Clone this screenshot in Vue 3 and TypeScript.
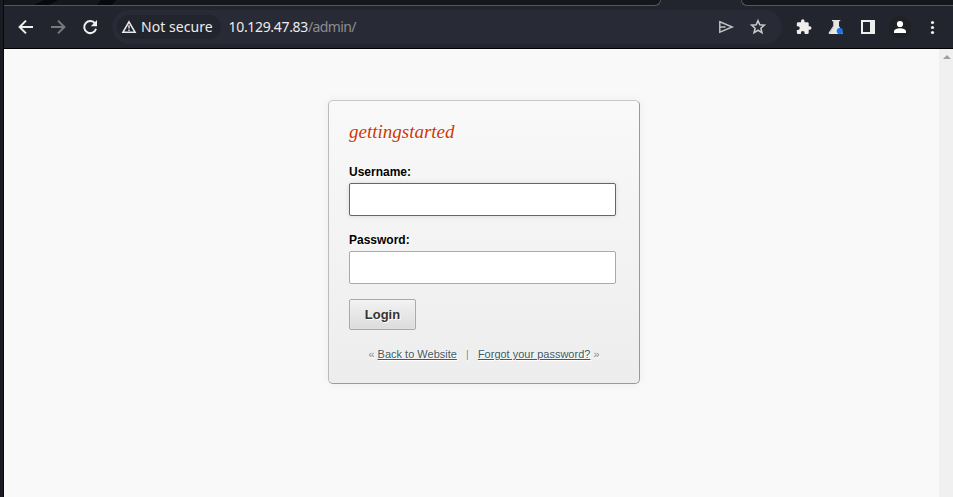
<script setup lang="ts">
import { ref } from 'vue'

const username = ref<string>('')
const password = ref<string>('')
</script>

<template>
  <div class="window">
    <header class="chrome">
      <div class="tabs">
        <div class="tab-left">
          <svg class="streaks" width="120" height="5" viewBox="0 0 120 5"><path d="M30 5 40 0H54L45 5ZM93 5 97 0H112L108 5Z" fill="#08090c" /></svg>
        </div>
        <div class="tab-active"></div>
        <div class="tab-right"></div>
      </div>
      <div class="toolbar">
        <svg class="nav back" width="20" height="20" viewBox="0 0 20 20"><path d="M17 10H4M10 3.6 3.6 10l6.4 6.4" fill="none" stroke="#efefed" stroke-width="2" /></svg>
        <svg class="nav forward" width="20" height="20" viewBox="0 0 20 20"><path d="M3 10h13M10 3.6l6.4 6.4-6.4 6.4" fill="none" stroke="#797a7d" stroke-width="2" /></svg>
        <svg class="nav reload" width="20" height="20" viewBox="0 0 20 20"><path d="M15.1 6.6A6 6 0 1 0 16 11.7" fill="none" stroke="#efefed" stroke-width="2" /><path d="M17 3v6.2h-6.2Z" fill="#efefed" /></svg>
        <div class="omnibox">
          <div class="chip">
            <svg width="16" height="16" viewBox="0 0 16 16"><path d="M8 2.9 14 13.2H2Z" fill="none" stroke="#e9e9e9" stroke-width="1.6" /><path d="M8 6.3v3.2M8 10.6v1.5" stroke="#e9e9e9" stroke-width="1.4" /></svg>
            <span>Not secure</span>
          </div>
          <div class="url"><span class="host">10.129.47.83</span><span class="path">/admin/</span></div>
          <svg class="send" width="18" height="18" viewBox="0 0 18 18"><path d="M2.8 3.8 15.2 9 2.8 14.2ZM3 9h5.5" fill="none" stroke="#c1c1c3" stroke-width="1.5" /></svg>
          <svg class="star" width="18" height="18" viewBox="0 0 18 18"><path d="m9 2.7 1.8 4.1 4.5.4-3.4 3 1 4.4L9 12.3l-3.9 2.3 1-4.4-3.4-3 4.5-.4Z" fill="none" stroke="#c8c8c9" stroke-width="1.6" /></svg>
        </div>
        <div class="actions">
          <svg width="18" height="18" viewBox="0 0 24 24"><path fill="#eeeeec" transform="translate(.6 .9) scale(.93)" d="M20.5 11H19V7a2 2 0 0 0-2-2h-4V3.5a2.5 2.5 0 0 0-5 0V5H4a2 2 0 0 0-2 2v3.8h1.5a2.7 2.7 0 0 1 0 5.4H2V20a2 2 0 0 0 2 2h3.8v-1.5a2.7 2.7 0 0 1 5.4 0V22H17a2 2 0 0 0 2-2v-4h1.5a2.5 2.5 0 0 0 0-5Z" /></svg>
          <svg width="18" height="18" viewBox="0 0 18 18"><path fill="#e8e6e3" d="M5 2h8.200v1.300H12V8l3.500 6.500c.3.900 0 1.500-.8 1.500H2.600c-.8 0-1.100-.7-.8-1.500L6.200 8V3.300H5Z" /><path d="M6.200 3.300h.9V8l-3.900 6.500h-1L6.200 8Z" fill="#b5b5b5" /><circle cx="12.800" cy="13.100" r="3.100" fill="#1a73e8" /></svg>
          <svg width="18" height="18" viewBox="0 0 18 18"><path fill="#eeeeec" fill-rule="evenodd" d="M2 2h14v14H2ZM4 4v10h7V4Z" /></svg>
          <svg class="avatar" width="22" height="22" viewBox="0 0 22 22"><circle cx="11" cy="11" r="11" fill="#202124" /><circle cx="11" cy="8" r="3.1" fill="#fff" /><path d="M5 17v-1.5C5 13.2 8.5 12.3 11 12.3s6 .9 6 3.2V17Z" fill="#fff" /></svg>
          <svg width="18" height="18" viewBox="0 0 18 18"><g fill="#eeeeec"><circle cx="9.5" cy="4.5" r="1.6" /><circle cx="9.5" cy="9.5" r="1.6" /><circle cx="9.5" cy="14.5" r="1.6" /></g></svg>
        </div>
      </div>
    </header>
    <div class="viewport">
      <main class="page">
        <form class="card" @submit.prevent>
          <h1>gettingstarted</h1>
          <label for="user">Username:</label>
          <input id="user" v-model="username" class="active" type="text" />
          <label for="pass">Password:</label>
          <input id="pass" v-model="password" type="password" />
          <button type="submit">Login</button>
          <p class="links">« <a href="#">Back to Website</a> <span>|</span> <a href="#">Forgot your password?</a> »</p>
        </form>
      </main>
      <aside class="scrollbar"><svg width="8" height="4" viewBox="0 0 8 4"><path d="M4 0 8 4H0Z" fill="#a0a0a0" /></svg></aside>
    </div>
  </div>
</template>

<style>
body { margin: 0; overflow: hidden; background: #f9f9f9; }
</style>

<style scoped>
* { box-sizing: border-box; }
svg { display: block; flex: none; }
.window { display: flex; flex-direction: column; height: 497px; border-left: 3px solid #1a1b20; }
.chrome { height: 49px; flex: none; background: #22252e; border-left: 1px solid #08090c; border-bottom: 1px solid #000; }
.tabs { display: flex; height: 6px; }
.tab-left, .tab-right { background: #15171c; border-bottom: 1px solid #55575d; }
.tab-left { width: 657px; border-right: 1px solid #55575d; border-bottom-right-radius: 6px; }
.tab-active { width: 80px; }
.tab-right { flex: 1; border-left: 1px solid #55575d; border-bottom-left-radius: 6px; }
.toolbar { display: flex; align-items: center; height: 42px; padding-left: 12px; }
.nav { margin-right: 12px; }
.omnibox { display: flex; align-items: center; width: 670px; height: 34px; border-radius: 17px; background: #282a35; padding: 0 15px 0 5px; font: 14px/20px "Noto Sans", sans-serif; }
.chip { display: flex; align-items: center; width: 104px; height: 24px; padding-left: 4px; border-radius: 12px; background: #22252e; color: #ececec; gap: 4px; white-space: nowrap; letter-spacing: .06px; }
.url { flex: 1; margin-left: 7.5px; white-space: nowrap; letter-spacing: -.32px; }
.host { color: #ececec; }
.path { color: #8c8d91; letter-spacing: -.62px; }
.send { margin-right: 14px; }
.actions { display: flex; align-items: center; margin-left: 13px; gap: 14px; }
.avatar { margin: 0 -2px; }
.viewport { flex: 1; display: flex; border-left: 1px solid #08090c; }
.page { flex: 1; background: #f9f9f9; padding-top: 51px; }
.scrollbar { width: 14px; background: #f0f0f0; padding: 6px 0 0 4px; }
.card { width: 312px; height: 284px; margin-left: 324px; padding: 20px 23px 0 20px; border: 1px solid; border-color: #c9c9c9 #999 #999 #bbb; border-radius: 5px; background: linear-gradient(#f9f9f9, #ededed); box-shadow: 0 0 10px rgba(0, 0, 0, .06); font-family: "Liberation Sans", Arial, sans-serif; text-shadow: 1px 1px 0 #fff; }
h1 { margin: 0; height: 43px; font: italic 19px/22px "Liberation Serif", serif; color: #cf3805; }
label { display: block; height: 19px; font-size: 12px; line-height: 16px; font-weight: bold; color: #000; }
input { display: block; width: 267px; height: 33px; margin: 0 0 16px; padding: 5px; border: 1px solid #aaa; border-radius: 2px; background: #fff; outline: 0; font: 14px "Liberation Sans", sans-serif; }
input.active { border-color: #666; box-shadow: 0 0 5px rgba(0, 0, 0, .12); }
button { display: block; width: 67px; height: 31px; margin-top: -1px; padding: 0; border: 1px solid #aaa; border-radius: 2px; background: linear-gradient(#f2f2f2, #dcdcdc); box-shadow: inset 0 0 1px #fff; color: #333; font: bold 13px "Liberation Sans", sans-serif; text-shadow: 1px 1px 0 #fff; }
.links { margin: 17px -3px 0 0; text-align: center; font-size: 11px; line-height: 15px; color: #888; white-space: nowrap; }
.links a { color: #415a66; text-decoration: underline; }
.links span { margin: 0 6px; }
</style>
